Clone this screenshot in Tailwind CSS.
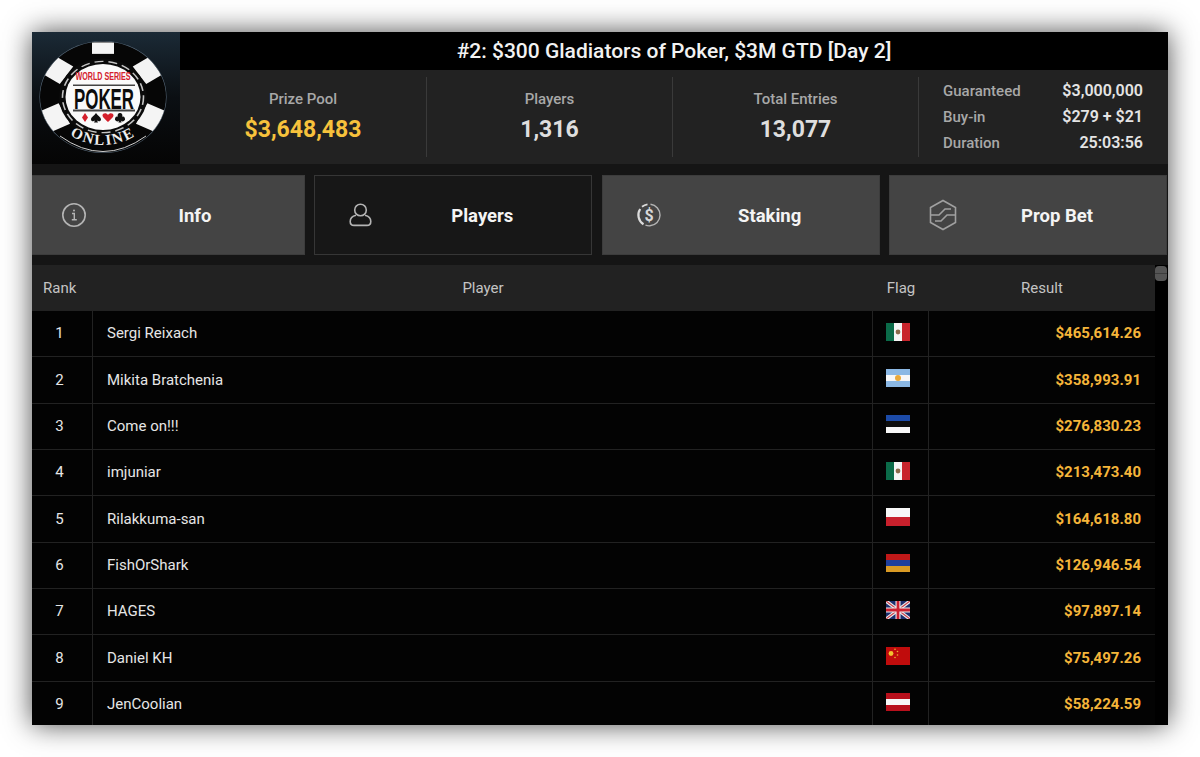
<!DOCTYPE html>
<html>
<head>
<meta charset="utf-8">
<script src="https://cdn.jsdelivr.net/npm/@tailwindcss/browser@4"></script>
</head>
<body class="bg-white h-[757px] overflow-hidden font-['Roboto',sans-serif]">
<div class="pt-8 px-8">
<div class="w-[1136px] h-[693px] overflow-hidden bg-[#151515] shadow-[0_0_26px_rgba(0,0,0,0.7)]">
  <!-- top -->
  <div class="flex h-[132px]">
    <div class="w-[148px] h-[132px] bg-gradient-to-b from-[#1b2a36] via-[#0b0f13] to-[#050505]">
      <svg width="148" height="132" viewBox="0 0 148 132">
        <defs><clipPath id="chip"><circle cx="71" cy="68" r="63"/></clipPath></defs>
        <g transform="translate(71 65) scale(1 0.88) translate(-71 -68)">
          <circle cx="71" cy="68" r="63.5" fill="#5f7283"/>
          <circle cx="71" cy="68" r="63" fill="#060606"/>
          <g fill="#f4f4f4" clip-path="url(#chip)">
            <rect x="60" y="6" width="22" height="13"/>
            <rect x="59" y="5" width="24" height="19" transform="rotate(56 71 68)"/>
            <rect x="59" y="5" width="24" height="19" transform="rotate(-56 71 68)"/>
            <rect x="58" y="4" width="26" height="21" transform="rotate(116 71 68)"/>
            <rect x="58" y="4" width="26" height="21" transform="rotate(-116 71 68)"/>
          </g>
          <circle cx="71" cy="68" r="44" fill="#0a0a0a"/>
          <circle cx="71" cy="68" r="40.5" fill="none" stroke="#c4c4c4" stroke-width="1.6" stroke-dasharray="9 5"/>
          <circle cx="71" cy="68" r="37.5" fill="#fafafa"/>
        </g>
        <text x="71" y="48" text-anchor="middle" font-family="'Liberation Sans',sans-serif" font-size="11" font-weight="700" fill="#d4202c" textLength="55" lengthAdjust="spacingAndGlyphs">WORLD SERIES</text>
        <rect x="41" y="52.5" width="62" height="1.5" fill="#444"/>
        <rect x="41" y="77.5" width="62" height="2" fill="#444"/>
        <text x="72" y="76.5" text-anchor="middle" font-family="'Liberation Sans',sans-serif" font-size="30" font-weight="700" fill="#0c0c0c" textLength="60" lengthAdjust="spacingAndGlyphs">POKER</text>
        <path d="M53 81L56 85.5L53 90L50 85.5Z" fill="#d4202c"/>
        <path d="M64 81C66 84 69 85 69 87.5C69 89.5 66.5 89.8 65 88.5L66 90.5H62L63 88.5C61.5 89.8 59 89.5 59 87.5C59 85 62 84 64 81Z" fill="#111"/>
        <path d="M76 90C73 87 70.5 85.5 70.5 83.3C70.5 81 74.5 80.3 76 83C77.5 80.3 81.5 81 81.5 83.3C81.5 85.5 79 87 76 90Z" fill="#d4202c"/>
        <path d="M88 81a2.3 2.3 0 0 1 2 3.6a2.4 2.4 0 1 1 -1.2 3.8l0.8 2h-3.2l0.8 -2a2.4 2.4 0 1 1 -1.2 -3.8a2.3 2.3 0 0 1 2 -3.6Z" fill="#111"/>
        <path id="arc" d="M36 102 Q71 124 106 102" fill="none"/>
        <text font-family="'Liberation Serif',serif" font-size="15" font-weight="700" fill="#eeeeee" letter-spacing="1.8"><textPath href="#arc" startOffset="50%" text-anchor="middle">ONLINE</textPath></text>
        <path d="M28 104 Q71 135 114 104" fill="none" stroke="#d0d0d0" stroke-width="1"/>
      </svg>
    </div>
    <div class="flex-1 flex flex-col">
      <div class="h-[38px] bg-black flex items-center justify-center pt-[2px] text-[21px] font-medium text-[#f2f2f2]">#2: $300 Gladiators of Poker, $3M GTD [Day 2]</div>
      <div class="h-[94px] bg-[#222222] py-[7px] grid grid-cols-[247px_246px_246px_1fr]">
        <div class="border-r border-[#3a3a3a] flex flex-col items-center justify-center gap-[5px]">
          <div class="text-[15px] leading-[20px] font-medium text-[#a8a8a8]">Prize Pool</div>
          <div class="text-[23px] leading-[32px] font-bold text-[#f7c23c]">$3,648,483</div>
        </div>
        <div class="border-r border-[#3a3a3a] flex flex-col items-center justify-center gap-[5px]">
          <div class="text-[15px] leading-[20px] font-medium text-[#a8a8a8]">Players</div>
          <div class="text-[23px] leading-[32px] font-bold text-[#dedede]">1,316</div>
        </div>
        <div class="border-r border-[#3a3a3a] flex flex-col items-center justify-center gap-[5px]">
          <div class="text-[15px] leading-[20px] font-medium text-[#a8a8a8]">Total Entries</div>
          <div class="text-[23px] leading-[32px] font-bold text-[#dedede]">13,077</div>
        </div>
        <div class="pl-[24px] pr-[25px] flex flex-col justify-center leading-[26px] font-medium">
          <div class="flex justify-between items-center"><span class="text-[15px] text-[#a8a8a8]">Guaranteed</span><span class="text-[16px] font-semibold text-[#e4e4e4]">$3,000,000</span></div>
          <div class="flex justify-between items-center"><span class="text-[15px] text-[#a8a8a8]">Buy-in</span><span class="text-[16px] font-semibold text-[#e4e4e4]">$279 + $21</span></div>
          <div class="flex justify-between items-center"><span class="text-[15px] text-[#a8a8a8]">Duration</span><span class="text-[16px] font-semibold text-[#e4e4e4]">25:03:56</span></div>
        </div>
      </div>
    </div>
  </div>
  <!-- tabs -->
  <div class="pt-[11px] pb-[10px] overflow-hidden">
    <div class="w-[1140px] ml-[-5px] grid grid-cols-4 gap-[9.33px] h-[80px] text-[18.5px] font-bold text-[#f4f4f4]">
      <div class="bg-[#444444] border border-[#3c3c3c] grid grid-cols-[92px_148px_1fr] items-center">
        <svg class="justify-self-center" width="26" height="26" viewBox="0 0 26 26" fill="none" stroke="#b4b4b4" stroke-width="1.6"><circle cx="13" cy="13" r="11.2"/><path d="M11 11.5h2.3v6.2M10.8 17.8h5" stroke-width="1.4"/><circle cx="13" cy="8.4" r="1" fill="#b4b4b4" stroke="none"/></svg>
        <span class="text-center pt-[3px] pl-[2px]">Info</span>
      </div>
      <div class="bg-[#171717] border border-[#363636] grid grid-cols-[92px_148px_1fr] items-center">
        <svg class="justify-self-center" width="26" height="26" viewBox="0 0 26 26" fill="none" stroke="#b4b4b4" stroke-width="1.6"><circle cx="12.5" cy="8" r="5.8"/><path d="M8 13.2C4.5 14 2.2 16.2 2.2 19.5C2.2 22 3.8 23.4 6 23.4H19C21.2 23.4 22.8 22 22.8 19.5C22.8 16.2 20.5 14 17 13.2"/></svg>
        <span class="text-center pt-[3px] pl-[2px]">Players</span>
      </div>
      <div class="bg-[#444444] border border-[#3c3c3c] grid grid-cols-[92px_148px_1fr] items-center">
        <svg class="justify-self-center ml-[1px]" width="26" height="26" viewBox="0 0 26 26" fill="none" stroke="#b4b4b4" stroke-width="1.4"><path d="M14.5 2.3A10.8 10.8 0 0 1 14 23.8 M14 23.8 A10.8 10.8 0 0 1 9.5 23.2"/><path d="M7.5 22.2A10.8 10.8 0 0 1 4.2 7" stroke="#dcdcdc" stroke-width="2.2"/><path d="M6 4.8A10.8 10.8 0 0 1 11.5 2.3" stroke="#dcdcdc" stroke-width="1.8"/><text x="13" y="18.8" text-anchor="middle" font-family="'Roboto',sans-serif" font-size="16" font-weight="700" fill="#d8d8d8" stroke="none">$</text></svg>
        <span class="text-center pt-[3px] pl-[2px]">Staking</span>
      </div>
      <div class="bg-[#444444] border border-[#3c3c3c] grid grid-cols-[92px_148px_1fr] items-center">
        <svg class="justify-self-center ml-[14px]" width="28" height="32" viewBox="0 0 28 32" fill="none" stroke="#a0a0a0" stroke-width="1.6"><path d="M14 1.5L26.5 8.5V23.5L14 30.5L1.5 23.5V8.5Z"/><path d="M2 16H10L16 10H22"/><path d="M26 16H18L12 22H6"/></svg>
        <span class="text-center pt-[3px] pl-[2px]">Prop Bet</span>
      </div>
    </div>
  </div>
  <!-- table -->
  <div class="relative h-[460px] bg-black overflow-hidden">
    <div class="absolute right-[1px] top-[1px] w-[12px] h-[15px] rounded-[4px] bg-[#555555] flex items-center"><div class="w-full h-[1px] bg-[#3d3d3d]"></div></div>
    <div class="w-[1123px]">
      <div class="grid grid-cols-[61px_780px_56px_226px] h-[46px] bg-[#222222] items-center text-[15px] text-[#c4c4c4]">
        <div class="pl-[11px]">Rank</div>
        <div class="text-center">Player</div>
        <div class="text-center">Flag</div>
        <div class="text-center">Result</div>
      </div>
      <div class="grid grid-cols-[61px_780px_56px_226px] h-[46.33px] border-b border-[#222222] items-center text-[15px] text-[#e6e6e6] bg-[#030303]">
        <div class="h-full flex items-center justify-center border-r border-[#222222] pr-[5px]">1</div>
        <div class="pl-[14px] h-full flex items-center border-r border-[#222222]">Sergi Reixach</div>
        <div class="h-full flex items-center justify-center border-r border-[#222222] pb-1 pr-[5px]">
          <svg width="24" height="18" viewBox="0 0 24 18"><rect width="8" height="18" fill="#0b6b49"/><rect x="8" width="8" height="18" fill="#f5f5f5"/><rect x="16" width="8" height="18" fill="#c8242c"/><circle cx="12" cy="9" r="2.4" fill="#8a6a4c"/></svg>
        </div>
        <div class="pr-[14px] text-right font-bold text-[#f5b53a]">$465,614.26</div>
      </div>
      <div class="grid grid-cols-[61px_780px_56px_226px] h-[46.33px] border-b border-[#222222] items-center text-[15px] text-[#e6e6e6] bg-[#030303]">
        <div class="h-full flex items-center justify-center border-r border-[#222222] pr-[5px]">2</div>
        <div class="pl-[14px] h-full flex items-center border-r border-[#222222]">Mikita Bratchenia</div>
        <div class="h-full flex items-center justify-center border-r border-[#222222] pb-1 pr-[5px]">
          <svg width="24" height="18" viewBox="0 0 24 18"><rect width="24" height="18" fill="#8bb8e4"/><rect y="6" width="24" height="6" fill="#f7f7f7"/><circle cx="12" cy="9" r="3" fill="#eaa93a"/></svg>
        </div>
        <div class="pr-[14px] text-right font-bold text-[#f5b53a]">$358,993.91</div>
      </div>
      <div class="grid grid-cols-[61px_780px_56px_226px] h-[46.33px] border-b border-[#222222] items-center text-[15px] text-[#e6e6e6] bg-[#030303]">
        <div class="h-full flex items-center justify-center border-r border-[#222222] pr-[5px]">3</div>
        <div class="pl-[14px] h-full flex items-center border-r border-[#222222]">Come on!!!</div>
        <div class="h-full flex items-center justify-center border-r border-[#222222] pb-1 pr-[5px]">
          <svg width="24" height="18" viewBox="0 0 24 18"><rect width="24" height="6" fill="#1c4ba8"/><rect y="6" width="24" height="6" fill="#0d0d0d"/><rect y="12" width="24" height="6" fill="#f7f7f7"/></svg>
        </div>
        <div class="pr-[14px] text-right font-bold text-[#f5b53a]">$276,830.23</div>
      </div>
      <div class="grid grid-cols-[61px_780px_56px_226px] h-[46.33px] border-b border-[#222222] items-center text-[15px] text-[#e6e6e6] bg-[#030303]">
        <div class="h-full flex items-center justify-center border-r border-[#222222] pr-[5px]">4</div>
        <div class="pl-[14px] h-full flex items-center border-r border-[#222222]">imjuniar</div>
        <div class="h-full flex items-center justify-center border-r border-[#222222] pb-1 pr-[5px]">
          <svg width="24" height="18" viewBox="0 0 24 18"><rect width="8" height="18" fill="#0b6b49"/><rect x="8" width="8" height="18" fill="#f5f5f5"/><rect x="16" width="8" height="18" fill="#c8242c"/><circle cx="12" cy="9" r="2.4" fill="#8a6a4c"/></svg>
        </div>
        <div class="pr-[14px] text-right font-bold text-[#f5b53a]">$213,473.40</div>
      </div>
      <div class="grid grid-cols-[61px_780px_56px_226px] h-[46.33px] border-b border-[#222222] items-center text-[15px] text-[#e6e6e6] bg-[#030303]">
        <div class="h-full flex items-center justify-center border-r border-[#222222] pr-[5px]">5</div>
        <div class="pl-[14px] h-full flex items-center border-r border-[#222222]">Rilakkuma-san</div>
        <div class="h-full flex items-center justify-center border-r border-[#222222] pb-1 pr-[5px]">
          <svg width="24" height="18" viewBox="0 0 24 18"><rect width="24" height="9" fill="#f7f7f7"/><rect y="9" width="24" height="9" fill="#c8202c"/></svg>
        </div>
        <div class="pr-[14px] text-right font-bold text-[#f5b53a]">$164,618.80</div>
      </div>
      <div class="grid grid-cols-[61px_780px_56px_226px] h-[46.33px] border-b border-[#222222] items-center text-[15px] text-[#e6e6e6] bg-[#030303]">
        <div class="h-full flex items-center justify-center border-r border-[#222222] pr-[5px]">6</div>
        <div class="pl-[14px] h-full flex items-center border-r border-[#222222]">FishOrShark</div>
        <div class="h-full flex items-center justify-center border-r border-[#222222] pb-1 pr-[5px]">
          <svg width="24" height="18" viewBox="0 0 24 18"><rect width="24" height="6" fill="#c01818"/><rect y="6" width="24" height="6" fill="#1f3f9c"/><rect y="12" width="24" height="6" fill="#d99a24"/></svg>
        </div>
        <div class="pr-[14px] text-right font-bold text-[#f5b53a]">$126,946.54</div>
      </div>
      <div class="grid grid-cols-[61px_780px_56px_226px] h-[46.33px] border-b border-[#222222] items-center text-[15px] text-[#e6e6e6] bg-[#030303]">
        <div class="h-full flex items-center justify-center border-r border-[#222222] pr-[5px]">7</div>
        <div class="pl-[14px] h-full flex items-center border-r border-[#222222]">HAGES</div>
        <div class="h-full flex items-center justify-center border-r border-[#222222] pb-1 pr-[5px]">
          <svg width="24" height="18" viewBox="0 0 24 18"><rect width="24" height="18" fill="#1c2f6e"/><path d="M0 0L24 18M24 0L0 18" stroke="#eeeeee" stroke-width="3.4"/><path d="M0 0L24 18M24 0L0 18" stroke="#c8404c" stroke-width="1.2"/><path d="M12 0V18M0 9H24" stroke="#eeeeee" stroke-width="5"/><path d="M12 0V18M0 9H24" stroke="#cc2030" stroke-width="2.8"/></svg>
        </div>
        <div class="pr-[14px] text-right font-bold text-[#f5b53a]">$97,897.14</div>
      </div>
      <div class="grid grid-cols-[61px_780px_56px_226px] h-[46.33px] border-b border-[#222222] items-center text-[15px] text-[#e6e6e6] bg-[#030303]">
        <div class="h-full flex items-center justify-center border-r border-[#222222] pr-[5px]">8</div>
        <div class="pl-[14px] h-full flex items-center border-r border-[#222222]">Daniel KH</div>
        <div class="h-full flex items-center justify-center border-r border-[#222222] pb-1 pr-[5px]">
          <svg width="24" height="18" viewBox="0 0 24 18"><rect width="24" height="18" fill="#c00c0c"/><circle cx="5" cy="6.5" r="2.4" fill="#f2c230"/><g fill="#e8b030"><circle cx="9" cy="2.2" r="0.8"/><circle cx="11.5" cy="4.5" r="0.8"/><circle cx="11.5" cy="8" r="0.8"/><circle cx="9" cy="10.5" r="0.8"/></g></svg>
        </div>
        <div class="pr-[14px] text-right font-bold text-[#f5b53a]">$75,497.26</div>
      </div>
      <div class="grid grid-cols-[61px_780px_56px_226px] h-[46.33px] border-b border-[#222222] items-center text-[15px] text-[#e6e6e6] bg-[#030303]">
        <div class="h-full flex items-center justify-center border-r border-[#222222] pr-[5px]">9</div>
        <div class="pl-[14px] h-full flex items-center border-r border-[#222222]">JenCoolian</div>
        <div class="h-full flex items-center justify-center border-r border-[#222222] pb-1 pr-[5px]">
          <svg width="24" height="18" viewBox="0 0 24 18"><rect width="24" height="18" fill="#b8101c"/><rect y="6" width="24" height="6" fill="#f7f7f7"/></svg>
        </div>
        <div class="pr-[14px] text-right font-bold text-[#f5b53a]">$58,224.59</div>
      </div>
    </div>
  </div>
</div>
</div>
</body>
</html>
